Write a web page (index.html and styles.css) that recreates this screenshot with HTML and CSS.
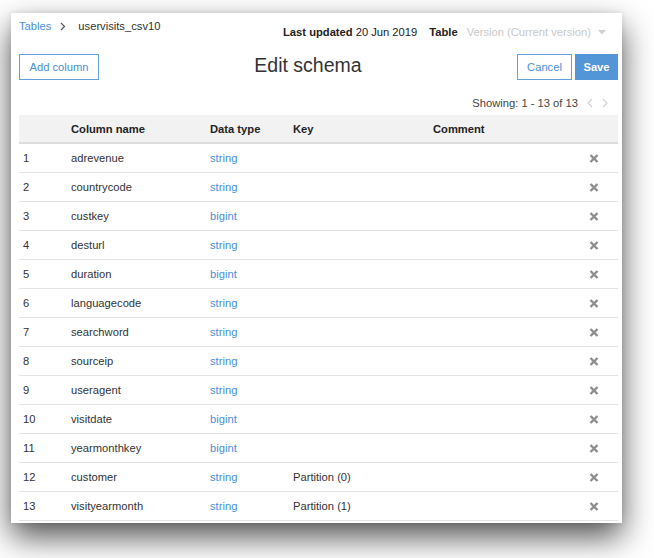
FILE: index.html
```html
<!DOCTYPE html>
<html>
<head>
<meta charset="utf-8">
<link rel="stylesheet" href="styles.css">
</head>
<body>
<div class="panel">
  <div class="topbar">
    <div class="crumbs">
      <a class="link">Tables</a>
      <span class="sep"><svg width="6" height="9" viewBox="0 0 6 9"><path d="M1 1 L4.5 4.5 L1 8" fill="none" stroke="#555" stroke-width="1.2"/></svg></span>
      <span>uservisits_csv10</span>
    </div>
    <div class="meta">
      <b>Last updated</b><span class="date">20 Jun 2019</span><b class="tbl">Table</b><span class="version">Version (Current version)</span><svg class="caret" width="8" height="5" viewBox="0 0 8 5"><path d="M0 0 H8 L4 4.5 Z" fill="#cfcfcf"/></svg>
    </div>
  </div>
  <div class="toolbar">
    <button class="btn btn-outline add">Add column</button>
    <div class="title">Edit schema</div>
    <div class="actions">
      <button class="btn btn-outline cancel">Cancel</button>
      <button class="btn btn-primary save">Save</button>
    </div>
  </div>
  <div class="showing">
    <span>Showing: 1 - 13 of 13</span>
    <svg class="chev" width="6" height="10" viewBox="0 0 6 10"><path d="M5 1 L1 5 L5 9" fill="none" stroke="#d2d2d2" stroke-width="1.2"/></svg>
    <svg class="chev" width="6" height="10" viewBox="0 0 6 10"><path d="M1 1 L5 5 L1 9" fill="none" stroke="#d2d2d2" stroke-width="1.2"/></svg>
  </div>
  <table class="schema">
    <colgroup>
      <col class="c-num"><col class="c-name"><col class="c-type"><col class="c-key"><col class="c-comment"><col class="c-act">
    </colgroup>
    <thead>
      <tr><th></th><th>Column name</th><th>Data type</th><th>Key</th><th>Comment</th><th></th></tr>
    </thead>
    <tbody id="rows"></tbody>
  </table>
</div>
<script>
var data = [
  ["adrevenue","string",""],["countrycode","string",""],["custkey","bigint",""],
  ["desturl","string",""],["duration","bigint",""],["languagecode","string",""],
  ["searchword","string",""],["sourceip","string",""],["useragent","string",""],
  ["visitdate","bigint",""],["yearmonthkey","bigint",""],["customer","string","Partition (0)"],
  ["visityearmonth","string","Partition (1)"]
];
var x = '<svg width="10" height="9" viewBox="0 0 10 9"><path d="M1.5 1 L8.5 8 M8.5 1 L1.5 8" stroke="#8d8d8d" stroke-width="2.4" stroke-linecap="butt"/></svg>';
var html = "";
data.forEach(function (r, i) {
  html += '<tr><td class="num">' + (i + 1) + '</td><td>' + r[0] + '</td><td class="type">' + r[1] + '</td><td>' + r[2] + '</td><td></td><td class="act">' + x + '</td></tr>';
});
document.getElementById("rows").innerHTML = html;
</script>
</body>
</html>
```
FILE: styles.css
```css
html, body {
  margin: 0;
  padding: 0;
  background: #fff;
}
body {
  font-family: "Liberation Sans", Arial, Helvetica, sans-serif;
  font-size: 11.2px;
  color: #333;
  min-height: 558px;
  box-sizing: border-box;
  padding: 13px 0 0 11px;
}
.panel {
  width: 611px;
  height: 510px;
  box-sizing: border-box;
  padding: 0 4px 0 8px;
  background: #fff;
  box-shadow: 0 14px 30px rgba(0, 0, 0, 0.68), 0 0 6px rgba(0, 0, 0, 0.1);
}
.topbar {
  display: flex;
  justify-content: space-between;
  align-items: flex-start;
  height: 41px;
}
.crumbs {
  margin-top: 6px;
  line-height: 14px;
  display: flex;
  align-items: center;
}
.link {
  color: #4a8fd8;
}
.sep {
  display: inline-flex;
  margin: 0 12px 0 9px;
}
.meta {
  margin-top: 12px;
  margin-right: 12px;
  line-height: 14px;
  display: flex;
  align-items: center;
  white-space: nowrap;
}
.meta b {
  font-weight: bold;
  color: #222;
}
.date {
  margin-left: 3px;
  color: #222;
}
.meta .tbl {
  margin-left: 12px;
}
.version {
  color: #c9c9c9;
  margin-left: 9px;
}
.caret {
  margin-left: 7px;
}
.toolbar {
  display: flex;
  align-items: center;
  height: 26px;
}
.btn {
  font-family: inherit;
  font-size: 11.2px;
  height: 26px;
  box-sizing: border-box;
  padding: 0;
  margin: 0;
  cursor: pointer;
}
.btn-outline {
  background: #fff;
  border: 1px solid #63a1dc;
  color: #4a8fd8;
}
.add {
  width: 80px;
}
.title {
  flex: 1;
  text-align: center;
  font-size: 19.5px;
  color: #333;
  margin-top: -4px;
}
.actions {
  display: flex;
  gap: 3px;
}
.cancel {
  width: 55px;
}
.save {
  width: 43px;
  border: 1px solid #5296d8;
  background: #5296d8;
  color: #fff;
  font-weight: bold;
}
.showing {
  margin-top: 16px;
  height: 14px;
  line-height: 14px;
  display: flex;
  justify-content: flex-end;
  align-items: center;
  padding-right: 10px;
  color: #444;
}
.chev {
  margin-left: 9px;
}
.schema {
  margin-top: 5px;
  width: 599px;
  border-collapse: collapse;
  table-layout: fixed;
}
.c-num { width: 52px; }
.c-name { width: 139px; }
.c-type { width: 83px; }
.c-key { width: 140px; }
.c-comment { width: 137px; }
.c-act { width: 48px; }
.schema th {
  background: #f2f2f2;
  height: 27px;
  padding: 0;
  text-align: left;
  font-weight: bold;
  color: #222;
  border-bottom: 2px solid #dcdcdc;
}
.schema td {
  height: 28px;
  padding: 0;
  border-bottom: 1px solid #e3e3e3;
  color: #333;
  white-space: nowrap;
}
.schema td.num {
  padding-left: 4px;
}
.schema td.type {
  color: #4a8fd8;
}
.schema td.act {
  text-align: center;
  line-height: 0;
}
```
